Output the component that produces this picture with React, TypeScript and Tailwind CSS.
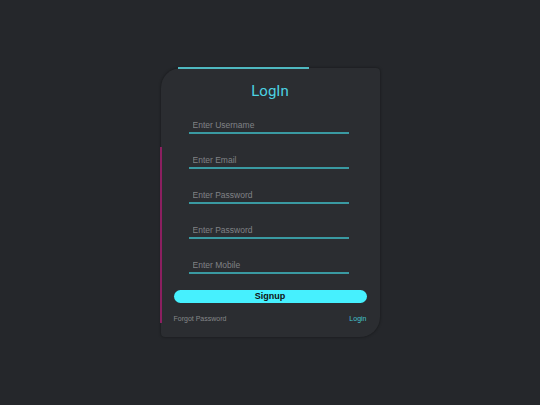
export default function App() {
  const fields = ['Enter Username', 'Enter Email', 'Enter Password', 'Enter Password', 'Enter Mobile'];

  return (
    <main className="w-[540px] h-[405px] bg-[#25272b] flex justify-center pt-[68px] font-['Liberation_Sans',Arial,sans-serif]">
      <div className="relative w-[219px] h-[269px] bg-[#2b2d31] rounded-tl-[20px] rounded-br-[20px] rounded-tr-[4px] rounded-bl-[4px] shadow-[0_0_3px_rgba(0,0,0,0.45)] flex flex-col px-[13px]">
        {/* decorative bars */}
        <div className="absolute left-[17px] top-[-1px] w-[131px] h-[2px] bg-[#4fb8c0]"></div>
        <div className="absolute left-[-1px] top-[79px] w-[2px] h-[176px] bg-[#8c1f60]"></div>

        <h1 className="text-center text-[15px] leading-[20px] text-[#4cd3e2] mt-[13px] font-['Roboto',sans-serif]">LogIn</h1>

        <div className="flex flex-col gap-[19px] mt-[17px] ml-[15px] w-[160px]">
          {fields.map((f, i) => (
            <input
              key={i}
              type="text"
              placeholder={f}
              className="h-[16px] bg-transparent border-b-2 border-[#3a9aa2] pl-1 text-[8.5px] text-white placeholder:text-[#808286] outline-none"
            />
          ))}
        </div>

        <button className="mt-[16px] h-[13px] w-full rounded-full bg-[#46f0fe] text-[9px] font-bold text-[#111] leading-[13px]">
          Signup
        </button>

        <div className="flex justify-between items-center mt-[11px] text-[7px]">
          <span className="text-[#858789]">Forgot Password</span>
          <span className="text-[#45c3cf]">Login</span>
        </div>
      </div>
    </main>
  );
}
